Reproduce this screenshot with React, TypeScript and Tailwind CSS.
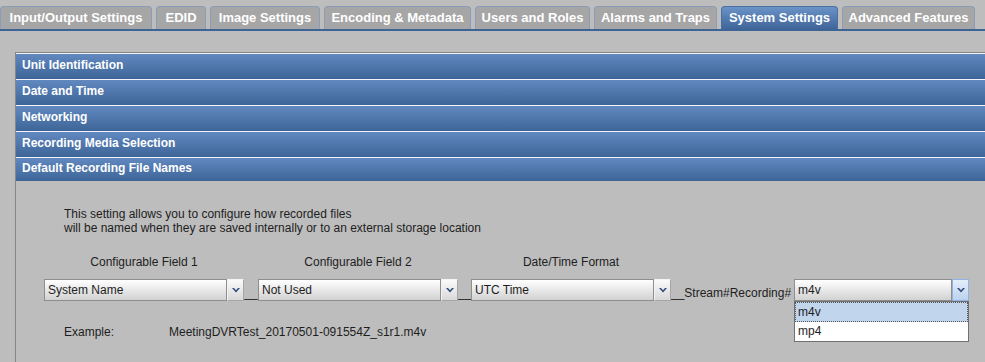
import React from "react";

const tabs = [
  { label: "Input/Output Settings", w: "w-[152px]" },
  { label: "EDID", w: "w-[50px]" },
  { label: "Image Settings", w: "w-[110px]" },
  { label: "Encoding & Metadata", w: "w-[147px]" },
  { label: "Users and Roles", w: "w-[115px]" },
  { label: "Alarms and Traps", w: "w-[123px]" },
  { label: "System Settings", w: "w-[117px]", active: true },
  { label: "Advanced Features", w: "w-[133px]" },
];

const sections = [
  "Unit Identification",
  "Date and Time",
  "Networking",
  "Recording Media Selection",
  "Default Recording File Names",
];

function Chevron() {
  return (
    <svg width="8" height="5" viewBox="0 0 8 5">
      <path d="M0 0 L4 4.5 L8 0 L6 0 L4 2.3 L2 0 Z" fill="#2c4a7c" />
    </svg>
  );
}

function Select({ value, w, open }: { value: string; w: string; open?: boolean }) {
  return (
    <div className={`relative flex h-[22px] shrink-0 ${w}`}>
      <div className="flex-1 border border-[#8e8e8e] bg-gradient-to-b from-[#ffffff] to-[#d2d2d2] pl-[3px] leading-[20px] text-[#1e1e1e]">
        {value}
      </div>
      <div
        className={`flex w-[17px] items-center justify-center border ${
          open
            ? "border-[#8fb3e0] bg-gradient-to-b from-[#e4eefa] to-[#bcd2ee]"
            : "border-t-[#f4f4f4] border-l-[#f4f4f4] border-r-[#a6a6a6] border-b-[#a6a6a6] bg-gradient-to-b from-[#fbfbfb] to-[#d8d8d8]"
        }`}
      >
        <Chevron />
      </div>
      {open && (
        <div className="absolute left-0 top-[22px] z-10 w-full border border-[#707070] bg-white">
          <div className="h-[20px] border border-dotted border-[#555] bg-[#c1d5ed] pl-[2px] leading-[18px] text-[#1e1e1e]">
            m4v
          </div>
          <div className="h-[19px] pl-[3px] leading-[19px] text-[#1e1e1e]">mp4</div>
        </div>
      )}
    </div>
  );
}

function Field({ label, children }: { label: string; children: React.ReactNode }) {
  return (
    <div className="flex flex-col">
      <div className="h-[24px] text-center leading-[14px]">{label}</div>
      {children}
    </div>
  );
}

function Sep({ text, w }: { text: string; w: string }) {
  return <span className={`${w} shrink-0 self-end text-center leading-[16px]`}>{text}</span>;
}

export default function App() {
  return (
    <div
      className="h-[362px] w-[985px] overflow-hidden bg-[#bdbdbd] text-[12px]"
      style={{ fontFamily: '"Liberation Sans", Arial, sans-serif' }}
    >
      <div className="flex h-[31px] items-end gap-[4px] border-b-2 border-[#3e6395] pt-[6px]">
        {tabs.map((t) => (
          <div
            key={t.label}
            className={`flex h-[23px] ${t.w} shrink-0 items-center justify-center rounded-t-[4px] border border-b-0 text-[13px] font-bold text-white ${
              t.active
                ? "border-[#4a6fa3] bg-gradient-to-b from-[#6b93c8] to-[#3f6599]"
                : "border-[#8a9cb8] bg-[#a6a6a6]"
            }`}
          >
            {t.label}
          </div>
        ))}
      </div>

      <div className="ml-[15px] mt-[21px] h-[320px] border-l border-t border-[#858585]">
        {sections.map((s, i) => (
          <div
            key={s}
            className={`flex ${i === sections.length - 1 ? "h-[24px]" : "h-[26px]"} items-center border-t border-[#f0f4fa] bg-gradient-to-b from-[#6189c0] to-[#3e6598] pb-[3px] pl-[6px] text-[12px] font-bold text-white`}
          >
            {s}
          </div>
        ))}

        <div className="pl-[48px] pt-[26px] leading-[14px] text-[#1e1e1e]">
          <p>This setting allows you to configure how recorded files</p>
          <p>will be named when they are saved internally or to an external storage location</p>
        </div>

        <div className="mt-[20px] flex pl-[28px] text-[#1e1e1e]">
          <Field label="Configurable Field 1">
            <Select value="System Name" w="w-[200px]" />
          </Field>
          <Sep text="__" w="w-[14px]" />
          <Field label="Configurable Field 2">
            <Select value="Not Used" w="w-[200px]" />
          </Field>
          <Sep text="__" w="w-[13px]" />
          <Field label="Date/Time Format">
            <Select value="UTC Time" w="w-[200px]" />
          </Field>
          <span className="w-[123px] shrink-0 self-end leading-[16px]">__Stream#Recording#</span>
          <Select value="m4v" w="w-[175px] self-end" open />
        </div>

        <div className="mt-[22px] flex pl-[48px] text-[#1e1e1e]">
          <span className="w-[105px]">Example:</span>
          <span>MeetingDVRTest_20170501-091554Z_s1r1.m4v</span>
        </div>
      </div>
    </div>
  );
}
